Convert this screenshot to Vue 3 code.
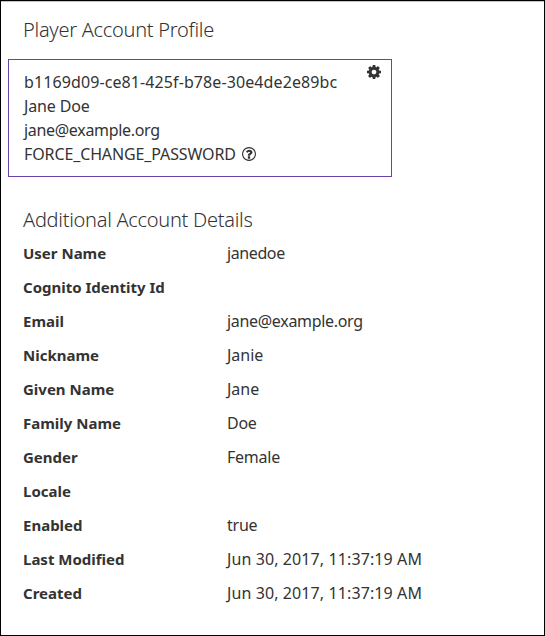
<script setup>
const details = [
  { label: 'User Name', value: 'janedoe', kind: 'login' },
  { label: 'Cognito Identity Id', value: '' },
  { label: 'Email', value: 'jane@example.org', kind: 'mail' },
  { label: 'Nickname', value: 'Janie' },
  { label: 'Given Name', value: 'Jane' },
  { label: 'Family Name', value: 'Doe', kind: 'word' },
  { label: 'Gender', value: 'Female', kind: 'word' },
  { label: 'Locale', value: '' },
  { label: 'Enabled', value: 'true', kind: 'word' },
  { label: 'Last Modified', value: 'Jun 30, 2017, 11:37:19 AM', kind: 'date' },
  { label: 'Created', value: 'Jun 30, 2017, 11:37:19 AM', kind: 'date' },
]
</script>

<template>
  <main class="page">
    <h1 class="heading profile-heading">Player Account Profile</h1>
    <section class="card">
      <div class="lines">
        <div class="uuid">b1169d09-ce81-425f-b78e-30e4de2e89bc</div>
        <div class="full-name">Jane Doe</div>
        <div class="mail">jane@example.org</div>
        <div class="status">
          <span class="caps">FORCE_CHANGE_PASSWORD</span>
          <svg class="help" viewBox="0 0 1536 1536" aria-hidden="true">
            <path d="M896 1056v192q0 14-9 23t-23 9H672q-14 0-23-9t-9-23v-192q0-14 9-23t23-9h192q14 0 23 9t9 23zm256-480q0 88-49.500 148.500T984 827q-37 21-62.500 49T896 928q0 14-9 23t-23 9H672q-14 0-23-9t-9-23v-37q0-70 49-126.500T797 687q45-21 63-40t18-48q0-28-30.500-48T774 531q-46 0-77 22-29 21-70 72-11 14-27 14-10 0-18-6L450 533q-26-19-9-43 126-202 351-202 135 0 247.500 88T1152 576zM768 128q-130 0-248.500 51t-204 136.500-136.500 204T128 768t51 248.500 136.500 204 204 136.500T768 1408t248.500-51 204-136.500 136.500-204T1408 768t-51-248.500-136.500-204-204-136.500T768 128zm768 640q0 209-103 385.500T1153.500 1433 768 1536t-385.500-103T103 1153.500 0 768t103-385.500T382.500 103 768 0t385.500 103T1433 382.500 1536 768z" />
          </svg>
        </div>
      </div>
      <svg class="gear" viewBox="0 0 1536 1536" aria-hidden="true">
        <path d="M1024 768q0-106-75-181t-181-75-181 75-75 181 75 181 181 75 181-75 75-181zm512-109v222q0 12-8 23t-20 13l-185 28q-19 54-39 91 35 50 107 138 10 12 10 25t-9 23q-27 37-99 108t-94 71q-12 0-26-9l-138-108q-44 23-91 38-16 136-29 186-7 28-36 28H657q-14 0-24.500-8.500T621 1506l-28-184q-49-16-90-37l-141 107q-10 9-25 9-14 0-25-11-126-114-165-168-7-10-7-23 0-12 8-23 15-21 51-66.500t54-70.500q-27-50-41-99L29 913q-13-2-21-12.500T0 877V655q0-12 8-23t19-13l186-28q14-46 39-92-40-57-107-138-10-12-10-24 0-10 9-23 26-36 98.500-107.500T337 135q13 0 26 10l138 107q44-23 91-38 16-136 29-186 7-28 36-28h222q14 0 24.500 8.500T915 30l28 184q49 16 90 37l142-107q9-9 24-9 13 0 25 10 129 119 165 170 7 8 7 22 0 12-8 23-15 21-51 66.500t-54 70.500q26 50 41 98l183 28q13 2 21 12.500t8 23.500z" />
      </svg>
    </section>
    <h2 class="heading details-heading">Additional Account Details</h2>
    <dl class="details">
      <div v-for="item in details" :key="item.label" class="row">
        <dt>{{ item.label }}</dt>
        <dd :class="item.kind">{{ item.value }}</dd>
      </div>
    </dl>
  </main>
</template>

<style>
body {
  margin: 0;
  background: #fff;
}
</style>

<style scoped>
.page {
  box-sizing: border-box;
  width: 545px;
  height: 636px;
  padding: 14px 7px 0;
  overflow: hidden;
  border: 1px solid #000;
  box-shadow: inset 0 1px #c4c4c4;
  background: #fff;
  color: #333;
  font: 16px/24px "Noto Sans", sans-serif;
  white-space: nowrap;
}
.heading {
  margin: 0 0 0 15px;
  font-size: 20px;
  font-weight: 300;
  line-height: 30px;
  letter-spacing: -0.28px;
}
.card {
  box-sizing: border-box;
  display: flex;
  justify-content: space-between;
  width: 384px;
  height: 118px;
  margin-top: 14px;
  padding: 10px 10px 0 15px;
  border: 1px solid #6644aa;
}
.uuid {
  letter-spacing: 0.1px;
}
.full-name {
  letter-spacing: -0.15px;
}
.mail {
  letter-spacing: -0.31px;
}
.login {
  letter-spacing: -0.4px;
}
.word {
  letter-spacing: -0.25px;
}
.date {
  letter-spacing: 0.1px;
}
.caps {
  letter-spacing: -0.12px;
}
.status {
  display: flex;
  align-items: center;
  gap: 6px;
}
.help,
.gear {
  width: 14px;
  height: 14px;
  fill: #333;
}
.gear {
  margin-top: -5px;
}
.details-heading {
  margin-top: 28px;
}
.details {
  margin: 6px 0 0 15px;
}
.row {
  display: grid;
  grid-template-columns: 204px 1fr;
  height: 34px;
}
dt {
  font-size: 15px;
  font-weight: 700;
}
dd {
  margin: 0;
}
</style>
